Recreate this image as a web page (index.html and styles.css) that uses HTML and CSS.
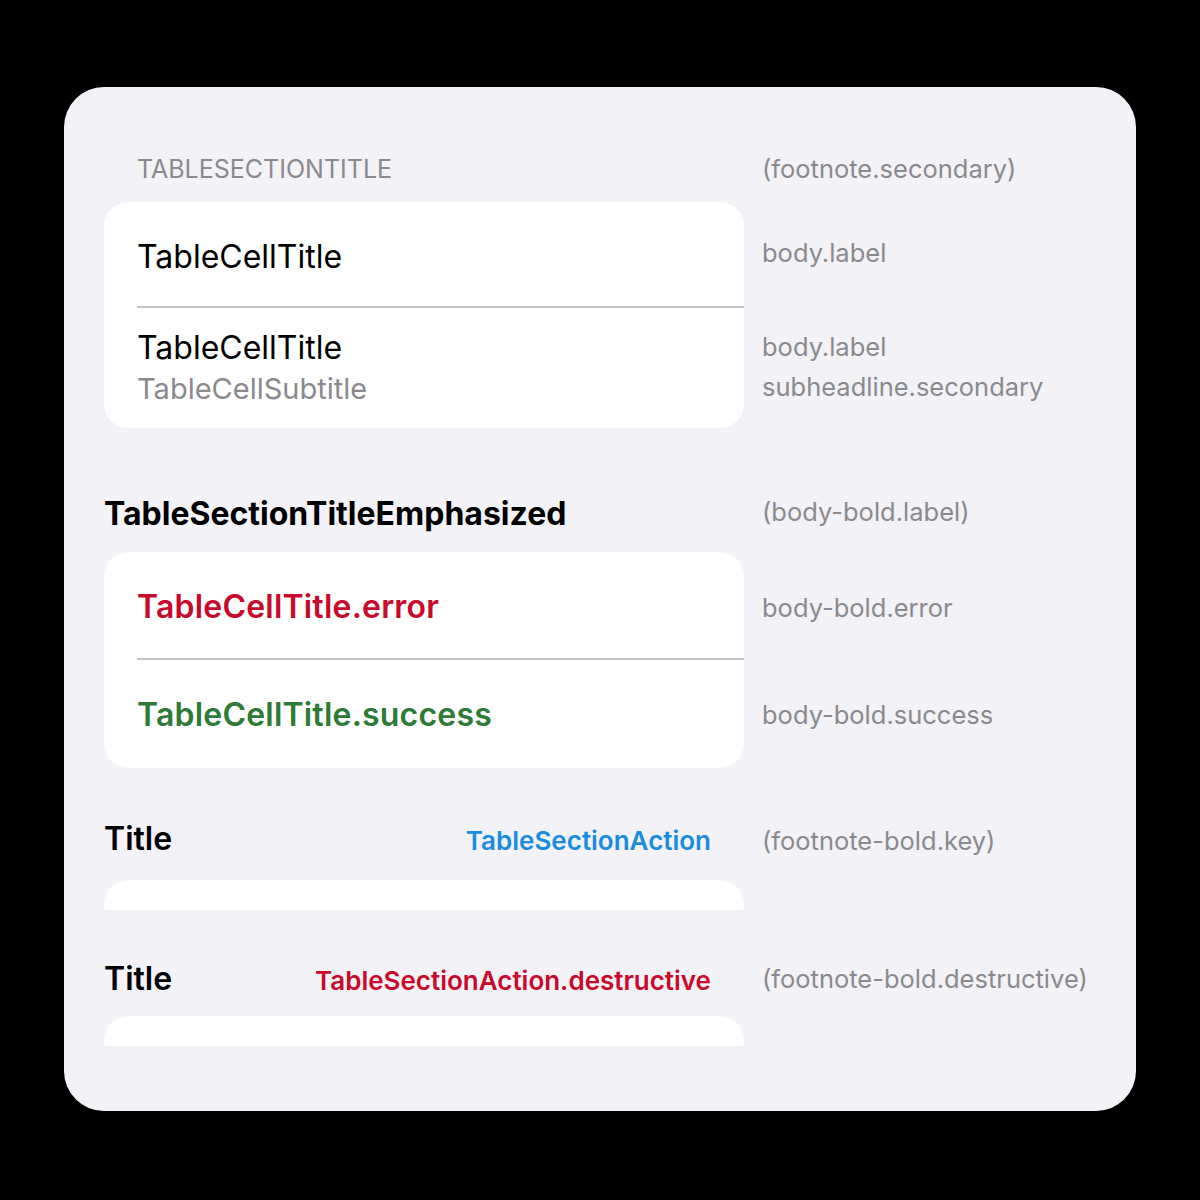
FILE: index.html
```html
<!DOCTYPE html>
<html lang="en">
<head>
<meta charset="utf-8">
<title>Table styles</title>
<link rel="stylesheet" href="styles.css">
</head>
<body>
<div class="panel">
  <section class="section s1">
    <div class="hrow h1">
      <div class="head caps">TABLESECTIONTITLE</div>
      <div class="note">(footnote.secondary)</div>
    </div>
    <div class="rows">
      <div class="cell first"><div class="cell-in line r1">TableCellTitle</div></div>
      <div class="note n-r1">body.label</div>

      <div class="cell last"><div class="cell-in stack r2"><div class="title">TableCellTitle</div><div class="sub">TableCellSubtitle</div></div></div>
      <div class="note stack-note"><div>body.label</div><div class="n2">subheadline.secondary</div></div>
    </div>
  </section>

  <section class="section s2">
    <div class="hrow h2">
      <div class="head emph">TableSectionTitleEmphasized</div>
      <div class="note n-h2">(body-bold.label)</div>
    </div>
    <div class="rows">
      <div class="cell first"><div class="cell-in line r3 bold error">TableCellTitle.error</div></div>
      <div class="note n-r3">body-bold.error</div>

      <div class="cell last"><div class="cell-in r4 bold success">TableCellTitle.success</div></div>
      <div class="note n-r4">body-bold.success</div>
    </div>
  </section>

  <section class="section s3">
    <div class="hrow h3">
      <div class="head action-head"><span class="htitle">Title</span><span class="action key">TableSectionAction</span></div>
      <div class="note n-h3">(footnote-bold.key)</div>
    </div>
    <div class="rows"><div class="stub"></div></div>
  </section>

  <section class="section s4">
    <div class="hrow h4">
      <div class="head action-head"><span class="htitle">Title</span><span class="action destructive">TableSectionAction.destructive</span></div>
      <div class="note n-h4">(footnote-bold.destructive)</div>
    </div>
    <div class="rows"><div class="stub"></div></div>
  </section>
</div>
</body>
</html>
```

FILE: styles.css
```css
html, body {
  margin: 0;
  padding: 0;
  background: #000;
}
body {
  font-family: Inter, "Noto Sans", "Liberation Sans", sans-serif;
  color: #000;
  width: 1200px;
  height: 1200px;
}
.panel {
  box-sizing: border-box;
  margin: 87px 0 0 64px;
  width: 1072px;
  height: 1024px;
  background: #f2f2f7;
  border-radius: 40px;
  padding: 0 40px;
  overflow: hidden;
}
.hrow, .rows {
  display: grid;
  grid-template-columns: 640px auto;
  column-gap: 18px;
  align-items: center;
}

/* vertical rhythm */
.s1 { padding-top: 67px; }
.h1 { height: 30px; margin-bottom: 18px; }
.s2 { padding-top: 67px; }
.h2 { height: 38px; margin-bottom: 19px; }
.s3 { padding-top: 52px; }
.h3 { height: 38px; margin-bottom: 22px; }
.s4 { padding-top: 50px; }
.h4 { height: 38px; margin-bottom: 18px; }

.note {
  font-size: 25.5px;
  line-height: 30px;
  color: #8a8a8e;
  white-space: nowrap;
}
.caps {
  font-size: 25px;
  line-height: 30px;
  color: #8a8a8e;
  padding-left: 33px;
}
.emph {
  font-size: 32px;
  line-height: 38px;
  font-weight: 700;
}
.n-h2 { margin-bottom: 5px; }
.n-h3 { margin-top: 2px; }
.n-h4 { margin-bottom: 2px; }

.cell {
  background: #fff;
  padding-left: 33px;
  font-size: 32px;
}
.cell.first { border-radius: 24px 24px 0 0; }
.cell.last { border-radius: 0 0 24px 24px; }
.cell-in {
  box-sizing: border-box;
  display: flex;
  align-items: center;
  line-height: 38px;
}
.cell-in.line { border-bottom: 2px solid #c4c4c6; }
.r1 { height: 106px; padding-top: 6px; }
.n-r1 { margin-bottom: 4px; }
.r2 {
  height: 120px;
  padding: 21px 0 0;
  flex-direction: column;
  align-items: flex-start;
}
.title { line-height: 38px; }
.sub {
  margin-top: 5px;
  font-size: 29px;
  line-height: 34px;
  color: #8a8a8e;
}
.stack-note { display: flex; flex-direction: column; margin-bottom: 2px; }
.stack-note .n2 { margin-top: 10px; }

.r3 { height: 108px; padding-top: 4px; }
.n-r3 { margin-top: 4px; }
.r4 { height: 108px; padding-top: 2px; }
.n-r4 { margin-top: 2px; }
.bold { font-weight: 600; letter-spacing: 0.2px; }
.error { color: #c8092b; }
.success { color: #2e7a37; }

.action-head {
  display: flex;
  justify-content: space-between;
  align-items: baseline;
  padding-right: 33px;
  line-height: 38px;
}
.htitle {
  font-size: 32px;
  font-weight: 600;
}
.action {
  font-size: 26px;
  font-weight: 600;
}
.key { color: #1b8be0; }
.destructive { color: #c8092b; }
.stub {
  height: 30px;
  background: #fff;
  border-radius: 24px 24px 0 0;
}
```
